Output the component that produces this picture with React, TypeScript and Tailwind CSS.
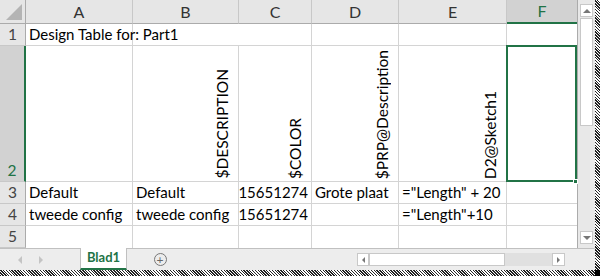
import React from "react";

const cols = ["A", "B", "C", "D", "E", "F"];

function Cell({
  children,
  className = "",
}: {
  children?: React.ReactNode;
  className?: string;
}) {
  return (
    <div
      className={
        "border-r border-b border-[#d4d4d4] flex items-end px-[3px] pb-[1px] overflow-visible whitespace-nowrap text-[15px] leading-[20px] text-black " +
        className
      }
    >
      {children}
    </div>
  );
}

function Vert({ children }: { children: React.ReactNode }) {
  return (
    <div className="w-full h-full flex items-end justify-end pr-[5px] pb-[1px]">
      <span className="[writing-mode:vertical-rl] rotate-180 text-[15.5px] leading-[16px] whitespace-nowrap">
        {children}
      </span>
    </div>
  );
}

function RowHead({ n, sel = false }: { n: number; sel?: boolean }) {
  return (
    <div
      className={
        "flex items-end justify-center pb-[1px] border-b border-[#c8c8c8] text-[15.5px] leading-[20px] " +
        (sel
          ? "bg-[#d2d2d2] text-[#217346] border-r-2 border-r-[#217346]"
          : "bg-[#e6e6e6] text-[#444] border-r border-r-[#ababab]")
      }
    >
      {n}
    </div>
  );
}

export default function App() {
  return (
    <div className="w-[600px] h-[276px] flex flex-col bg-white overflow-hidden font-['Lato',_'Open_Sans',_sans-serif]">
      <div className="flex flex-1 min-h-0">
        <div className="flex flex-col w-[595px]">
          <div className="flex h-[248px]">
            <div className="grid grid-cols-[26px_107px_106px_73px_87px_108px_70px] grid-rows-[24px_22px_136px_22px_22px_22px] w-[577px]">
              {/* header row */}
              <div className="bg-[#e6e6e6] border-r border-b border-[#ababab] relative">
                <div className="absolute right-[3px] bottom-[3px] w-0 h-0 border-l-[16px] border-l-transparent border-b-[16px] border-b-[#b4b4b4]" />
              </div>
              {cols.map((c) =>
                c === "F" ? (
                  <div
                    key={c}
                    className="bg-[#d2d2d2] border-b-2 border-b-[#217346] flex items-center justify-center text-[16px] text-[#217346]"
                  >
                    {c}
                  </div>
                ) : (
                  <div
                    key={c}
                    className="bg-[#e6e6e6] border-r border-r-[#c8c8c8] border-b border-b-[#ababab] flex items-center justify-center text-[16px] text-[#333]"
                  >
                    {c}
                  </div>
                )
              )}

              {/* row 1 */}
              <RowHead n={1} />
              <Cell>Design Table for: Part1</Cell>
              <Cell className="border-r-0"></Cell>
              <Cell></Cell>
              <Cell></Cell>
              <Cell></Cell>
              <Cell className="border-r-0"></Cell>

              {/* row 2 */}
              <RowHead n={2} sel />
              <Cell></Cell>
              <Cell className="p-0">
                <Vert>$DESCRIPTION</Vert>
              </Cell>
              <Cell className="p-0">
                <Vert>$COLOR</Vert>
              </Cell>
              <Cell className="p-0">
                <Vert>$PRP@Description</Vert>
              </Cell>
              <Cell className="p-0">
                <Vert>D2@Sketch1</Vert>
              </Cell>
              <div className="relative border-b border-[#d4d4d4]">
                <div className="absolute -left-[1px] -top-[1px] right-0 bottom-[-1px] border-2 border-[#217346]" />
                <div className="absolute -right-[1px] -bottom-[3px] w-[5px] h-[5px] bg-[#217346] border border-white" />
              </div>

              {/* row 3 */}
              <RowHead n={3} />
              <Cell>Default</Cell>
              <Cell>Default</Cell>
              <Cell className="justify-end">15651274</Cell>
              <Cell>Grote plaat</Cell>
              <Cell>="Length" + 20</Cell>
              <Cell className="border-r-0"></Cell>

              {/* row 4 */}
              <RowHead n={4} />
              <Cell>tweede config</Cell>
              <Cell>tweede config</Cell>
              <Cell className="justify-end">15651274</Cell>
              <Cell></Cell>
              <Cell>="Length"+10</Cell>
              <Cell className="border-r-0"></Cell>

              {/* row 5 */}
              <RowHead n={5} />
              <Cell className="border-b-0"></Cell>
              <Cell className="border-b-0"></Cell>
              <Cell className="border-b-0"></Cell>
              <Cell className="border-b-0"></Cell>
              <Cell className="border-b-0"></Cell>
              <Cell className="border-b-0 border-r-0"></Cell>
            </div>

            {/* vertical scrollbar */}
            <div className="w-[18px] bg-[#e8e8e8] border-l border-[#ababab] flex flex-col items-center py-[4px]">
              <div className="w-[13px] h-[13px] bg-white border border-[#c8c8c8] flex items-center justify-center">
                <div className="w-0 h-0 border-l-[4px] border-r-[4px] border-b-[4px] border-l-transparent border-r-transparent border-b-[#777]" />
              </div>
              <div className="w-[13px] h-[108px] bg-white border border-[#c8c8c8] mt-[1px]" />
              <div className="flex-1" />
              <div className="w-[13px] h-[13px] bg-white border border-[#c8c8c8] flex items-center justify-center">
                <div className="w-0 h-0 border-l-[4px] border-r-[4px] border-t-[4px] border-l-transparent border-r-transparent border-t-[#777]" />
              </div>
            </div>
          </div>

          {/* tab bar */}
          <div className="h-[22px] bg-[#ededed] border-t border-[#c0c0c0] flex items-stretch">
            <div className="w-[80px] flex items-center pl-[18px] gap-[17px] text-[#c0c0c0]">
              <div className="w-0 h-0 border-t-[4px] border-b-[4px] border-r-[4px] border-t-transparent border-b-transparent border-r-[#c4c4c4]" />
              <div className="w-0 h-0 border-t-[4px] border-b-[4px] border-l-[4px] border-t-transparent border-b-transparent border-l-[#c4c4c4]" />
            </div>
            <div className="w-[47px] -mt-[1px] bg-white border-x border-[#c0c0c0] border-b-2 border-b-[#217346] flex items-center justify-center text-[13px] font-bold text-[#217346]">
              Blad1
            </div>
            <div className="w-[66px] flex items-center justify-center">
              <div className="w-[13px] h-[13px] rounded-full border border-[#777] flex items-center justify-center text-[#666] text-[12px] leading-none">
                +
              </div>
            </div>
            <div className="w-[164px] flex items-center">
              <span className="text-[#aaa] text-[10px] leading-none ml-[160px]">⋮</span>
            </div>
            <div className="flex items-center">
              <div className="h-[13px] w-[12px] bg-white border border-[#c8c8c8] flex items-center justify-center">
                <div className="w-0 h-0 border-t-[3px] border-b-[3px] border-r-[3px] border-t-transparent border-b-transparent border-r-[#777]" />
              </div>
              <div className="h-[13px] w-[136px] bg-white border border-[#c8c8c8]" />
              <div className="h-[13px] w-[47px] bg-[#e0e0e0]" />
              <div className="h-[13px] w-[13px] bg-white border border-[#c8c8c8] flex items-center justify-center">
                <div className="w-0 h-0 border-t-[3px] border-b-[3px] border-l-[3px] border-t-transparent border-b-transparent border-l-[#777]" />
              </div>
            </div>
            <div className="flex-1" />
          </div>
        </div>
        <div className="w-[5px] bg-[repeating-linear-gradient(45deg,#222_0px,#222_1px,#fff_1px,#fff_2px)]" />
      </div>
      <div className="h-[6px] bg-[repeating-linear-gradient(45deg,#222_0px,#222_1px,#fff_1px,#fff_2px)] relative">
        <div className="absolute right-0 top-0 w-[5px] h-[6px] bg-black" />
      </div>
    </div>
  );
}
